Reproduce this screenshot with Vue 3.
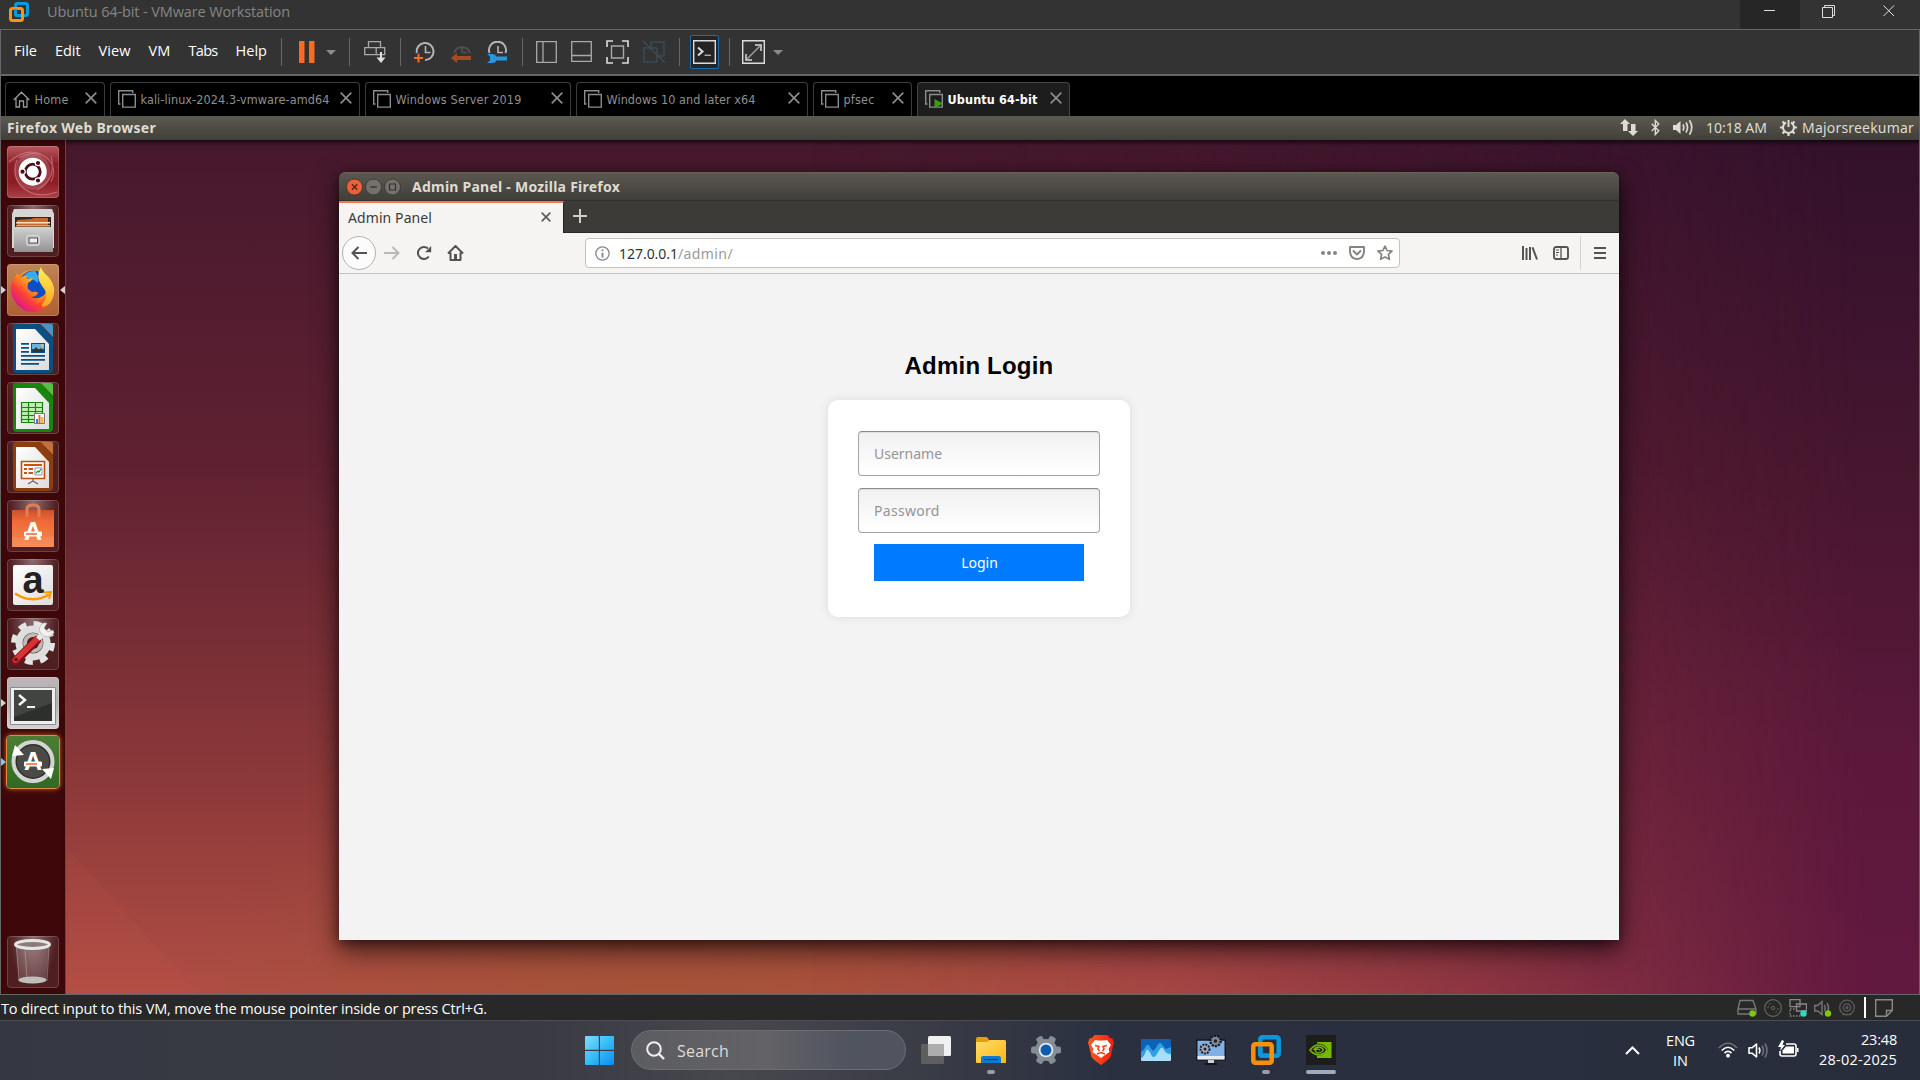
<script setup>
// Tracks a label out (or in) so that it occupies the given width in pixels.
const vFit = {
  mounted(el, { value }) {
    const natural = el.getBoundingClientRect().width
    el.style.letterSpacing = `${(value - natural) / el.textContent.length}px`
  },
}

const menus = [
  { label: 'File', w: 23 },
  { label: 'Edit', w: 25.5 },
  { label: 'View', w: 32 },
  { label: 'VM', w: 22 },
  { label: 'Tabs', w: 29 },
  { label: 'Help', w: 31.5 },
]

const tabs = [
  { label: 'Home', width: 100, text: 34, kind: 'home' },
  { label: 'kali-linux-2024.3-vmware-amd64', width: 250, text: 189, kind: 'vm' },
  { label: 'Windows Server 2019', width: 206, text: 126, kind: 'vm' },
  { label: 'Windows 10 and later x64', width: 232, text: 149, kind: 'vm' },
  { label: 'pfsec', width: 99, text: 31, kind: 'vm' },
  { label: 'Ubuntu 64-bit', width: 153, text: 90, kind: 'vm', active: true },
]
</script>

<template>
  <div class="screen">
    <svg class="defs" width="0" height="0">
      <defs>
        <linearGradient id="steel" x1="0" y1="0" x2="0" y2="1"><stop offset="0" stop-color="#d2d2d2" /><stop offset="1" stop-color="#929292" /></linearGradient>
        <linearGradient id="page" x1="0" y1="0" x2="1" y2="1"><stop offset="0" stop-color="#fff" /><stop offset="1" stop-color="#dcdcdc" /></linearGradient>
        <linearGradient id="fox" x1=".8" y1="0" x2=".1" y2=".8"><stop offset="0" stop-color="#ffd52e" /><stop offset=".4" stop-color="#ff9320" /><stop offset=".7" stop-color="#fb4034" /><stop offset="1" stop-color="#e01b86" /></linearGradient>
        <linearGradient id="flame" x1="0" y1="0" x2="0" y2="1"><stop offset="0" stop-color="#fff35a" /><stop offset="1" stop-color="#ffa51c" /></linearGradient>
        <linearGradient id="win" x1="0" y1="0" x2="1" y2="1"><stop offset="0" stop-color="#7fdcff" /><stop offset=".5" stop-color="#35bdf8" /><stop offset="1" stop-color="#0a8df2" /></linearGradient>
        <linearGradient id="folder" x1="0" y1="0" x2="1" y2="1"><stop offset="0" stop-color="#ffdc6c" /><stop offset="1" stop-color="#fdb813" /></linearGradient>
        <linearGradient id="brave" x1="0" y1="0" x2="1" y2="0"><stop offset="0" stop-color="#ff5a1f" /><stop offset="1" stop-color="#f21d0c" /></linearGradient>
        <linearGradient id="bag" x1="0" y1="0" x2="0" y2="1"><stop offset="0" stop-color="#c9512f" /><stop offset=".3" stop-color="#ef6a35" /><stop offset="1" stop-color="#f5854e" /></linearGradient>
      </defs>
    </svg>

    <header class="titlebar">
      <svg class="vmlogo" width="20" height="20" viewBox="0 0 20 20" fill="none" stroke-width="3">
        <rect x="6.5" y="1.5" width="12" height="12" rx="2" stroke="#0b9bdc" />
        <rect x="1.5" y="6.5" width="12" height="12" rx="2" stroke="#f7941d" />
        <path d="M6.5 7v4.500q0 2 2 2h3" stroke="#0b9bdc" />
      </svg>
      <span v-fit="243" class="wintitle">Ubuntu 64-bit - VMware Workstation</span>
      <div class="winbtns">
        <div class="winbtn hover"><svg width="12" height="14" viewBox="0 0 12 14"><path d="M0 5.500h11" stroke="#ddd" /></svg></div>
        <div class="winbtn"><svg width="14" height="14" viewBox="0 0 14 14" fill="none" stroke="#ddd"><path d="M.5 2.500h10v10H.5zM2.500 2.500V.5h10v10h-2" /></svg></div>
        <div class="winbtn"><svg width="12" height="12" viewBox="0 0 12 12"><path d="M.5.5l10.500 10.500M11 .5L.5 11" stroke="#ddd" /></svg></div>
      </div>
    </header>

    <nav class="toolbar">
      <div class="menus"><span v-for="m in menus" :key="m.label" v-fit="m.w" class="menu">{{ m.label }}</span></div>
      <i class="sep" />
      <svg class="t-pause" width="38" height="22" viewBox="0 0 38 22"><path d="M0 0h5.500v22H0zM10 0h5.500v22H10z" fill="#fb6a22" /><path d="M27 9h10l-5 5z" fill="#8b8b8b" /></svg>
      <i class="sep" />
      <svg class="t-send" width="22" height="22" viewBox="0 0 22 22" fill="none" stroke="#a9a9a9" stroke-width="1.300"><path d="M4.500.7h12v6h-12zM.7 6.700h11.500v7H.7zM12.200 6.700h8.500v7h-8.500z" /><path d="M17 11v7" stroke="#ddd" stroke-width="2" /><path d="M12.500 16.500h9L17 22z" fill="#ddd" stroke="none" /></svg>
      <i class="sep" />
      <div class="clocks">
        <svg width="21" height="22" viewBox="0 0 21 22" fill="none"><path d="M2.700 12A8.500 8.500 0 1 1 11 19" stroke="#b5b5b5" stroke-width="2" /><path d="M11.500 5v6.500h5" stroke="#b5b5b5" stroke-width="1.600" /><path d="M0 17h9M4.500 12.500v9" stroke="#fb6a22" stroke-width="2" /></svg>
        <svg width="21" height="22" viewBox="0 0 21 22" fill="none"><path d="M3 12A8.500 8.500 0 0 1 19 12" stroke="#505050" stroke-width="2" /><path d="M11 5v6.500h5" stroke="#505050" stroke-width="1.600" /><path d="M5 17h15" stroke="#a34c24" stroke-width="4" /><path d="M0 17l6-5v10z" fill="#a34c24" /></svg>
        <svg width="21" height="22" viewBox="0 0 21 22" fill="none"><path d="M2.500 12A8.500 8.500 0 1 1 18.500 12" stroke="#b5b5b5" stroke-width="2" /><path d="M11 5v6.500h5" stroke="#b5b5b5" stroke-width="1.600" /><path d="M0 13h5q4 0 4 2.500h11v4H9Q9 22 5 22H0l3-2.500v-4z" fill="#2a97dc" /></svg>
      </div>
      <i class="sep" />
      <div class="views">
        <svg width="21" height="22" viewBox="0 0 21 22" fill="none" stroke="#a9a9a9" stroke-width="1.300"><path d="M.7.7h19.600v20.600H.7zM7 .7v20.600" /></svg>
        <svg width="21" height="22" viewBox="0 0 21 22" fill="none" stroke="#a9a9a9" stroke-width="1.300"><path d="M.7.7h19.600v19.600H.7zM.7 14.500h19.600" /></svg>
        <svg width="23" height="24" viewBox="0 0 23 24" fill="none"><path d="M1 7V1h6M16 1h6v6M22 17v6h-6M7 23H1v-6" stroke="#ddd" stroke-width="1.600" /><path d="M5.500 6h12v12h-12z" stroke="#a9a9a9" stroke-width="1.400" /></svg>
        <svg width="23" height="24" viewBox="0 0 23 24" fill="none" stroke="#3a4a57" stroke-width="1.400"><path d="M8 8V2h13v14h-7M1 8h13v14H1zM0 1l22 22" /></svg>
      </div>
      <i class="sep" />
      <div class="console"><svg width="23" height="24" viewBox="0 0 23 24" fill="none"><path d="M.7.7h21.600v22.600H.7z" fill="#242424" stroke="#ddd" stroke-width="1.400" /><path d="M5 7.500l4.500 4L5 15.500" stroke="#ddd" stroke-width="2" /><path d="M11.500 15.300H18" stroke="#aaa" stroke-width="1.400" /></svg></div>
      <i class="sep" />
      <svg class="t-full" width="42" height="24" viewBox="0 0 42 24" fill="none"><path d="M.7.7h21.600v22.600H.7z" stroke="#ddd" stroke-width="1.400" /><path d="M13 5h6v6M4 14v6h6" stroke="#ddd" stroke-width="1.500" /><path d="M5 19L18 6" stroke="#999" stroke-width="1.600" /><path d="M31 10h10l-5 5z" fill="#8b8b8b" /></svg>
    </nav>

    <div class="tabstrip">
      <div v-for="t in tabs" :key="t.label" class="vmtab" :class="{ active: t.active, home: t.kind === 'home' }" :style="{ width: t.width + 'px' }">
        <svg v-if="t.kind === 'home'" width="17" height="17" viewBox="0 0 17 17" fill="none" stroke="#9a9a9a" stroke-width="1.300"><path d="M.7 9L8.500 1.200 16.300 9M3 7v9h3.500v-6h4v6H14V7" /></svg>
        <svg v-else width="18" height="18" viewBox="0 0 18 18" fill="none" stroke="#8c8c8c" stroke-width="1.400"><path d="M2.500 14H.7V.7h14V3M4.700 4.500h12.600v12.600H4.700z" /><path v-if="t.active" d="M9.500 9l8.500 4.500L9.500 18z" fill="#3f9c0c" stroke="none" /></svg>
        <span v-fit="t.text" class="vmtext">{{ t.label }}</span>
        <svg class="x" width="12" height="12" viewBox="0 0 12 12"><path d="M.7.7l10.600 10.600M11.300.7L.7 11.300" stroke="#8c8c8c" stroke-width="1.700" /></svg>
      </div>
    </div>

    <main class="guest">
      <div class="panel">
        <b v-fit="149">Firefox Web Browser</b>
        <div class="indicators">
          <svg width="18" height="17" viewBox="0 0 18 17" fill="#dfdbd2"><path d="M5 0l5 5H7.500v7H3V5H0zM13 17l5-5h-2.500V5H11v7H8z" /></svg>
          <svg class="bt" width="9" height="17" viewBox="0 0 9 17" fill="none" stroke="#dfdbd2" stroke-width="1.400"><path d="M.7 4.800l7 7-3.400 3.700V1.500l3.400 3.500-7 7" /></svg>
          <svg class="vol" width="21" height="17" viewBox="0 0 21 17" fill="none" stroke="#dfdbd2" stroke-width="1.700"><path d="M0 6h3l4.500-4v13L3 11H0z" fill="#dfdbd2" stroke="none" /><path d="M10 5.500q1.500 3 0 6M13 3.500q3 5 0 10M16.500 1.200q4.500 7.300 0 14.600" /></svg>
          <span v-fit="61" class="clock">10:18 AM</span>
          <svg class="cog" width="17" height="17" viewBox="0 0 17 17" fill="none" stroke="#dfdbd2"><path d="M6 3.500a5.500 5.500 0 1 0 5 0" stroke-width="2" /><path d="M8.500 1v7" stroke-width="2" /><path d="M0 8.500h3M14 8.500h3M8.500 14v3M2.500 2.500l2 2M14.500 2.500l-2 2M2.500 14.500l2-2M14.500 14.500l-2-2" stroke-width="2.200" /></svg>
          <span v-fit="112">Majorsreekumar</span>
        </div>
      </div>

      <div class="desktop">
        <aside class="launcher">
          <div class="tile dash"><svg viewBox="0 0 52 52" fill="none"><path d="M12 12Q30 2 42 14 50 24 44 36M50 46Q28 54 14 40 4 28 10 14M2 16Q18 2 34 8M44 10q6 24-14 34" stroke="#d98a90" stroke-width="1.200" opacity=".6" /><circle cx="25.700" cy="25.700" r="18" fill="#fff" opacity=".15" /><circle cx="25.700" cy="25.700" r="14" fill="#fff" /><circle cx="25.700" cy="25.700" r="7.500" stroke="#4c0d16" stroke-width="2.800" /><g fill="#4c0d16" stroke="#fff" stroke-width="1.200"><circle cx="15.500" cy="25.700" r="2.700" /><circle cx="31" cy="17" r="2.700" /><circle cx="31" cy="34.500" r="2.700" /></g></svg></div>
          <div class="tile"><svg viewBox="0 0 52 52"><path d="M7 4h38l2 5v34H5V9z" fill="#d5d5d5" /><path d="M8 12h36v10H8z" fill="#33261f" /><path d="M10 15l14-1 3-1h14v8H10z" fill="#c9682a" /><path d="M9 17h34v1.500H9z" fill="#ffe4bf" /><path d="M9 20h34v1.500H9z" fill="#f3a155" /><path d="M7 22h39v25H7z" fill="url(#steel)" /><rect x="19.500" y="30.500" width="13" height="10" rx="2" fill="#c2c2c2" stroke="#d9d9d9" /><rect x="22" y="33" width="8.500" height="5" fill="#eee" stroke="#555" /></svg></div>
          <div class="tile ff"><svg viewBox="0 0 52 52"><circle cx="26" cy="27" r="21" fill="url(#fox)" /><circle cx="26.500" cy="21" r="14.500" fill="#0c4fc4" /><path d="M14 15q6-9 14-8 4 5 3 12-6-6-17-4z" fill="#35aaf5" /><path d="M4 28Q3 19 9 12l1-3 3 5q2-2 7-2-1 2 0 3l6-1q-1 3-5 5-1 4 0 6l4 3q4-1 6 1-2 4-7 4 6 3 12-1-4 12-16 11Q6 40 4 28z" fill="url(#fox)" /><path d="M34 3q1 4 6 9 8 8 7 17-2 12-11 14-2-1-1-3 5-4 4-11-1-4-4-7-7-9-1-19z" fill="url(#flame)" /></svg></div>
          <div class="tile"><svg viewBox="0 0 52 52"><path d="M6 4q0-3 3-3h24l13 14v31q0 4-4 4H10q-4 0-4-4z" fill="#0b4f82" /><path d="M34 1h10q2 0 2 2v11z" fill="#4c93c2" /><path d="M9 6h19l14 15v26H9z" fill="url(#page)" /><g fill="#0b4f82"><path d="M14 20h8v1.800h-8zM14 24h8v1.800h-8zM14 28h8v1.800h-8zM14 32h24v1.800H14zM14 36h24v1.800H14zM14 40h18v1.800H14z" /><path d="M24 20h14v10H24z" /></g><path d="M25 21h12v5H25z" fill="#6ab3dd" /><path d="M25 29l4-5 3 3 2-2 3 4z" fill="#333" /><circle cx="35.500" cy="22.500" r="1.300" fill="#f5c83b" /></svg></div>
          <div class="tile"><svg viewBox="0 0 52 52"><path d="M6 4q0-3 3-3h24l13 14v31q0 4-4 4H10q-4 0-4-4z" fill="#17860f" /><path d="M34 1h10q2 0 2 2v11z" fill="#55c044" /><path d="M9 6h19l14 15v26H9z" fill="url(#page)" /><path d="M14 20h22v21H14z" fill="#bdeeb0" /><path d="M14.500 20.500h21v20h-21zM14 25.500h22M14 29.500h22M14 33.500h22M14 37.500h22M21.500 20v21M28.500 20v21" fill="none" stroke="#17860f" stroke-width="1.200" /><path d="M27.500 31.500h10v10h-10z" fill="#fff" stroke="#777" /><path d="M29 37h2v4h-2z" fill="#2686d0" /><path d="M31.500 33h2v8h-2z" fill="#f26a1b" /><path d="M34 35h2.500v6H34z" fill="#f5b83b" /></svg></div>
          <div class="tile"><svg viewBox="0 0 52 52"><path d="M6 4q0-3 3-3h24l13 14v31q0 4-4 4H10q-4 0-4-4z" fill="#8e3d0c" /><path d="M34 1h10q2 0 2 2v11z" fill="#c66f36" /><path d="M9 6h19l14 15v26H9z" fill="url(#page)" /><path d="M14.500 20.500h23v17h-23z" fill="#fff" stroke="#b8500f" stroke-width="1.600" /><path d="M17 23h18v2H17zM17 27h3v2h-3zM21.500 27H26v2h-4.500zM17 31h3v2h-3zM21.500 31H26v2h-4.500z" fill="#c9560f" /><path d="M28 27h7v7h-7z" fill="#fff" stroke="#777" stroke-width=".8" /><path d="M29 32l2-2 1 1 2-3" fill="none" stroke="#189a3c" stroke-width="1.200" /><path d="M26 38v2l-5 3M26 40l5 3" fill="none" stroke="#666" stroke-width="1.300" /></svg></div>
          <div class="tile"><svg viewBox="0 0 52 52"><path d="M5 10h42v37H5z" fill="url(#bag)" /><path d="M5 37h42v10H5z" fill="#fff" opacity=".08" /><path d="M20 17V9q0-4 6-4t6 4v8" fill="none" stroke="#e57b58" stroke-width="3" /><text x="26" y="40" class="glyph" font-size="25" fill="#fff">A</text><rect x="17" y="31.500" width="18" height="5" rx="1" fill="#fff" /><path d="M19 33.200h11v1.600H19z" fill="#ef6a35" /></svg></div>
          <div class="tile"><svg viewBox="0 0 52 52"><rect x="6" y="6" width="40" height="40" rx="2" fill="url(#page)" /><text x="26" y="34" class="glyph" font-size="38" fill="#222">a</text><path d="M8 34.500q17 11 34 1" fill="none" stroke="#f90" stroke-width="2.600" /><path d="M37 33.500l7-.5-2 7" fill="none" stroke="#f90" stroke-width="2" /></svg></div>
          <div class="tile"><svg viewBox="0 0 52 52"><circle cx="26" cy="25" r="18.500" fill="none" stroke="#e4e4e4" stroke-width="7" stroke-dasharray="7.500 7.030" /><circle cx="26" cy="25" r="14" fill="none" stroke="#dedede" stroke-width="7" /><circle cx="26" cy="25" r="10" fill="#bbb" /><circle cx="26" cy="25" r="6" fill="#5a1518" /><path d="M8.500 43L30 22" stroke="#8c0f12" stroke-width="8.500" stroke-linecap="round" /><path d="M8.500 42L29.500 21.500" stroke="#d23437" stroke-width="5.500" stroke-linecap="round" /><path d="M31 21L38 13" stroke="#e8e8e8" stroke-width="5" /><path d="M36 5q-6 5-2 11 6 6 13-1l-1-3-5 2-4-4 3-5z" fill="#f0f0f0" stroke="#aaa" stroke-width=".6" /><circle cx="9" cy="41.500" r="1.800" fill="#5a1518" /></svg></div>
          <div class="tile term"><svg viewBox="0 0 52 52"><path d="M3.500 10.500h45v37h-45z" fill="#eee" stroke="#8c8c8c" /><path d="M7 13h38v31H7z" fill="#2d2f2d" /><path d="M7 13h38v13L7 40z" fill="#fff" opacity=".1" /><path d="M12 18l6 5-6 5" fill="none" stroke="#f4f4f4" stroke-width="2.500" /><path d="M20 30h8" stroke="#f4f4f4" stroke-width="2" /></svg></div>
          <div class="tile upd"><svg viewBox="0 0 52 52"><circle cx="26" cy="25.500" r="19.500" fill="#2f2f2d" stroke="#d4d4d4" stroke-width="4" /><circle cx="26" cy="25.500" r="16" fill="#4a4a47" /><path d="M5 20l12-1L8 9zM47 32L35 33l9 10z" fill="#fff" /><text x="26" y="34" class="glyph" font-size="25" fill="#fff">A</text><rect x="17" y="25.500" width="18" height="5" rx="1" fill="#fff" /><path d="M19 27.200h11v1.600H19z" fill="#ef6a35" /></svg></div>
          <div class="tile trash"><svg viewBox="0 0 52 52"><path d="M9 11h33l-3 34q-14 5-27 0z" fill="#fff" opacity=".17" /><path d="M9.500 12l2.500 33M42 12l-2 33M18 15l2 27" stroke="#ddd" opacity=".35" fill="none" /><ellipse cx="25.500" cy="44" rx="14" ry="3.500" fill="#bdbfba" /><ellipse cx="25.500" cy="8.500" rx="17" ry="4" fill="#8d7b7b" stroke="#e4e6e2" stroke-width="3" /></svg></div>
          <i class="pip p3" /><i class="pip p3 right" /><i class="pip p10" /><i class="pip p11" />
        </aside>

        <div class="wallpaper">
          <section class="firefox">
            <div class="fx-title">
              <svg width="56" height="18" viewBox="0 0 56 18"><circle cx="8.500" cy="9" r="8" fill="#ec6238" stroke="#44302a" stroke-width=".8" /><path d="M6 6.300l5.200 5.400M11.200 6.300L6 11.700" stroke="#5c2412" stroke-width="1.400" /><circle cx="27.500" cy="9" r="8" fill="#73716a" stroke="#33322e" stroke-width=".8" /><path d="M24.300 9h6.500" stroke="#33322e" stroke-width="1.300" /><circle cx="46.500" cy="9" r="8" fill="#73716a" stroke="#33322e" stroke-width=".8" /><path d="M43.500 6h6v6h-6z" fill="none" stroke="#33322e" stroke-width="1.200" /></svg>
              <b v-fit="208">Admin Panel - Mozilla Firefox</b>
            </div>
            <div class="fx-tabs">
              <div class="fx-tab"><span v-fit="84">Admin Panel</span><svg width="10" height="10" viewBox="0 0 10 10"><path d="M.7.7l8.600 8.600M9.300.7L.7 9.300" stroke="#5e5d5a" stroke-width="1.700" /></svg></div>
              <svg class="plus" width="14" height="14" viewBox="0 0 14 14"><path d="M7 0v14M0 7h14" stroke="#d0cec8" stroke-width="2" /></svg>
            </div>
            <div class="fx-nav">
              <div class="back"><svg width="16" height="14" viewBox="0 0 16 14" fill="none" stroke="#55534f" stroke-width="2"><path d="M7.500 1l-6 6 6 6M1.500 7H16" /></svg></div>
              <svg class="fwd" width="16" height="14" viewBox="0 0 16 14" fill="none" stroke="#bab8b5" stroke-width="2"><path d="M8.500 1l6 6-6 6M14.500 7H0" /></svg>
              <svg class="reload" width="16" height="16" viewBox="0 0 16 16" fill="none" stroke="#55534f" stroke-width="2"><path d="M12.800 11.500A6 6 0 1 1 12 3.500" /><path d="M15.200 1v6.200H9z" fill="#55534f" stroke="none" /></svg>
              <svg class="fxhome" width="17" height="16" viewBox="0 0 17 16" fill="none" stroke="#55534f" stroke-width="2" stroke-linejoin="round"><path d="M1 8.500L8.500 1 16 8.500M3.500 7.500V15h10V7.500" /><path d="M7 9h3v6H7z" fill="#55534f" stroke="none" /></svg>
              <div class="url">
                <svg width="15" height="15" viewBox="0 0 15 15" fill="none" stroke="#888" stroke-width="1.300"><circle cx="7.500" cy="7.500" r="6.600" /><path d="M7.500 6.700V11.500M7.500 3.500v1.800" stroke-width="1.900" /></svg>
                <span v-fit="59" class="host">127.0.0.1</span><span v-fit="55" class="path">/admin/</span>
                <svg class="dots" width="16" height="4" viewBox="0 0 16 4" fill="#86847f"><circle cx="2" cy="2" r="2" /><circle cx="8" cy="2" r="2" /><circle cx="14" cy="2" r="2" /></svg>
                <svg class="pocket" width="16" height="14" viewBox="0 0 16 14" fill="none" stroke="#86847f" stroke-width="1.900" stroke-linejoin="round"><path d="M1 1h14v5q-1 7-7 7T1 6z" /><path d="M4.500 5L8 8.500 11.500 5" stroke-linecap="round" /></svg>
                <svg class="star" width="16" height="16" viewBox="0 0 16 16" fill="none" stroke="#86847f" stroke-width="1.700" stroke-linejoin="round"><path d="M8 1.200l2.100 4.300 4.900.6-3.600 3.300 1 4.900L8 12l-4.400 2.300 1-4.900L1 6.100l4.900-.6z" /></svg>
              </div>
              <svg class="lib" width="16" height="14" viewBox="0 0 16 14" stroke="#55534f" stroke-width="2"><path d="M1 0v14M4.500 2v12M8 1v13M10.500 1.300L15 13.500" /></svg>
              <svg class="side" width="16" height="14" viewBox="0 0 16 14" fill="none" stroke="#55534f" stroke-width="1.900"><rect x="1" y="1" width="14" height="12" rx="2" /><path d="M8 1v12" stroke-width="1.300" /><path d="M3 4h3M3 6.500h3M3 9h2" stroke-width="1" /></svg>
              <i class="navsep" />
              <svg width="12" height="12" viewBox="0 0 12 12" stroke="#55534f" stroke-width="2"><path d="M0 1h12M0 6h12M0 11h12" /></svg>
            </div>
            <div class="page">
              <h2>Admin Login</h2>
              <form class="card" @submit.prevent>
                <input type="text" placeholder="Username">
                <input type="password" placeholder="Password">
                <button type="submit">Login</button>
              </form>
            </div>
          </section>
        </div>
      </div>
    </main>

    <footer class="status">
      <span v-fit="486">To direct input to this VM, move the mouse pointer inside or press Ctrl+G.</span>
      <div class="devices">
        <svg width="20" height="18" viewBox="0 0 20 18" fill="none" stroke="#777" stroke-width="1.400"><path d="M3 1.500h13L19 10v5H1v-5zM1 10h18" /><circle cx="15.500" cy="14.500" r="3.200" fill="#7cc90f" stroke="none" /></svg>
        <svg width="18" height="18" viewBox="0 0 18 18" fill="none" stroke="#666"><circle cx="9" cy="9" r="8.300" stroke-width="1.200" /><circle cx="9" cy="9" r="1.700" /><path d="M4 9q0-4 4-5M14 9q0 4-4 5" stroke-dasharray="2 1.500" /></svg>
        <svg width="18" height="18" viewBox="0 0 18 18" fill="none" stroke="#888" stroke-width="1.300"><path d="M1 .7h10v7H1zM7.500 5h10v7h-10z" /><path d="M1 10h6M1 17h11M1 11v6" stroke-dasharray="1.500 1.500" /><circle cx="14.500" cy="14.500" r="3.200" fill="#2fd9c4" stroke="none" /></svg>
        <svg width="18" height="18" viewBox="0 0 18 18" fill="none" stroke="#777" stroke-width="1.400"><path d="M.7 6.500h3L8 2.500v13L3.700 12h-3zM10.500 6q1.500 3 0 6M13 4q2.500 4 1 8" /><circle cx="14" cy="14.500" r="3.200" fill="#7cc90f" stroke="none" /></svg>
        <svg width="16" height="18" viewBox="0 0 16 18" fill="none" stroke="#5c5c5c" stroke-width="1.300"><circle cx="8" cy="8.500" r="7.300" /><circle cx="8" cy="8.500" r="3.700" /><circle cx="8" cy="8.500" r="1" /><path d="M3.500 15.500h9" /></svg>
        <i class="bar" />
        <svg width="18" height="18" viewBox="0 0 18 18" fill="none" stroke="#8a8a8a" stroke-width="1.400"><path d="M.7.7h16.600v10.800l-5.800 5.800H.7zM17.300 11.500h-5.800v5.800" /></svg>
      </div>
    </footer>

    <div class="taskbar">
      <div class="apps">
        <svg class="start" width="29" height="29" viewBox="0 0 29 29" fill="url(#win)"><path d="M1 0h12.800v13.800H0V1q0-1 1-1zM15 0h13q1 0 1 1v12.800H15zM0 15h13.800v14H1q-1 0-1-1zM15 15h14v13q0 1-1 1H15z" /></svg>
        <div class="search"><svg width="19" height="19" viewBox="0 0 19 19" fill="none" stroke="#eee" stroke-width="2"><circle cx="8" cy="8" r="6.800" /><path d="M13 13l5 5" stroke-width="2.400" /></svg><span v-fit="52">Search</span></div>
        <div class="app"><svg viewBox="0 0 30 30"><rect x="0" y="9" width="23" height="20" rx="1.500" fill="#5f5f5f" /><rect x="7" y="1" width="23" height="20" rx="1.500" fill="#f0f0f0" /><path d="M7 9h16v12H8.500Q7 21 7 19.500z" fill="#adadad" /></svg></div>
        <div class="app run"><svg viewBox="0 0 30 30"><path d="M0 4q0-2 2-2h8q2 0 3 3h15q2 0 2 2v21H0z" fill="#e3a008" /><path d="M0 7h11l3-2h14q2 0 2 2v19q0 2-2 2H2q-2 0-2-2z" fill="url(#folder)" /><path d="M5 28v-5q0-2 2-2h16q2 0 2 2v5z" fill="#0f7bd0" /><path d="M8 24.500h14" stroke="#07467f" stroke-width="1.200" /></svg></div>
        <div class="app"><svg viewBox="0 0 30 30"><circle cx="15" cy="15" r="11" fill="#848c95" /><g fill="#848c95"><rect x="0" y="11.500" width="30" height="7" rx="2" /><rect x="0" y="11.500" width="30" height="7" rx="2" transform="rotate(60 15 15)" /><rect x="0" y="11.500" width="30" height="7" rx="2" transform="rotate(120 15 15)" /></g><circle cx="15" cy="15" r="7.300" fill="#e5e9ee" /><circle cx="15" cy="15" r="5.500" fill="#0f5cad" /></svg></div>
        <div class="app"><svg viewBox="0 0 30 30"><path d="M8.500 0h13L24 3l2.500.5L28 8l-1 3-2.500 11q-1 2-9.500 8-8.500-6-9.500-8L3 11 2 8l1.500-4.500L6 3z" fill="url(#brave)" /><path d="M9 5l3 .5h6l3-.5 4 5-2.500 4 1 3-4.500 3-4 3-4-3-4.500-3 1-3L5 10z" fill="#fff" /><path d="M9 10.500l4 1-1 2.500 1.500 2M21 10.500l-4 1 1 2.500-1.500 2M11 19l4-1.500 4 1.500" fill="none" stroke="#fb3f18" stroke-width="1.600" /></svg></div>
        <div class="app"><svg viewBox="0 0 30 30"><rect y="4" width="30" height="22" rx="1" fill="#0d62b5" /><path d="M0 17q3-2 5-6 2-3 4 1l3 4q2-1 4-5 2-5 5-2 2 4 4 5l5-2v13H0z" fill="#2f9fe6" /><path d="M0 23q3-1 5-7 1-3 3 0l3 5q2 3 5-2l3-5q2-3 4 1 2 4 7 4v6q0 1-1 1H1q-1 0-1-1z" fill="#a9defa" /></svg></div>
        <div class="app"><svg viewBox="0 0 30 30"><rect x=".7" y="5" width="28.600" height="20" rx="1" fill="#7fb0e8" stroke="#15181d" stroke-width="1.600" /><path d="M1.500 21h27v3.500h-27z" fill="#e6ebef" /><path d="M12 25h6v3h-6z" fill="#c9d1d8" /><path d="M9 29h12" stroke="#111" stroke-width="1.800" /><circle cx="9" cy="14" r="4.500" fill="#9fa8b0" stroke="#1d232b" stroke-width="2" stroke-dasharray="2 1" /><circle cx="9" cy="14" r="1.500" fill="#1d232b" /><circle cx="19.500" cy="6" r="5.200" fill="#7f8890" stroke="#15191f" stroke-width="2.200" stroke-dasharray="2.200 1" /><circle cx="19.500" cy="6" r="1.700" fill="#1d232b" /></svg></div>
        <div class="app run"><svg viewBox="0 0 30 30" fill="none" stroke-width="4.500"><rect x="9.300" y="2.300" width="18.400" height="18.400" rx="2" stroke="#0b97d8" /><rect x="2.300" y="9.300" width="18.400" height="18.400" rx="2" stroke="#f7900a" /><path d="M9.300 12v6.700q0 2 2 2H18" stroke="#0b97d8" /></svg></div>
        <div class="app run focus"><svg viewBox="0 0 30 30"><path d="M0 0h30v30H0z" fill="#1d1d1b" /><path d="M11 7h14.500v16H11z" fill="#76b900" /><path d="M3 15q4-6 9-6.500 7 0 10 6-4 6-10 6.500-6-1-9-6z" fill="#1d1d1b" /><path d="M4 15q4-5 8-5 6 0 9 5-3 5-9 5-5-1-8-5z" fill="none" stroke="#76b900" stroke-width="1.500" /><path d="M7.500 15q2-3 4.500-3 4 0 5.500 3-2 3-5.500 3-2 0-3-3 1-1 3-1 1.500.5 2 1.500" fill="none" stroke="#76b900" stroke-width="1.300" /></svg></div>
      </div>
      <div class="tray">
        <svg width="15" height="9" viewBox="0 0 15 9"><path d="M1 8l6.500-6.500L14 8" fill="none" stroke="#fff" stroke-width="2" /></svg>
        <div class="lang"><span v-fit="29">ENG</span><span v-fit="15">IN</span></div>
        <svg width="20" height="16" viewBox="0 0 20 16" fill="none" stroke-width="1.700"><path d="M1 6q9-9.500 18 0" stroke="#6b707a" /><path d="M3.700 8.500q6.300-6.500 12.600 0M6.500 11.200q3.500-3.500 7 0" stroke="#fff" /><circle cx="10" cy="13.700" r="1.900" fill="#fff" /></svg>
        <svg class="tvol" width="21" height="17" viewBox="0 0 21 17" fill="none" stroke="#fff" stroke-width="1.600" stroke-linejoin="round"><path d="M1 5.800h3L8.500 2v13L4 11.200H1z" /><path d="M11 5.500q1.700 3 0 6" /><path d="M14 3.500q3 5 0 10M17 1.500q4 7 0 14" stroke="#6b707a" /></svg>
        <svg class="bat" width="21" height="18" viewBox="0 0 21 18" fill="none" stroke="#fff" stroke-width="1.600"><path d="M8 4h8q2 0 2 2v8q0 2-2 2H4q-2 0-2-2v-3" /><path d="M8 6.500h8v7H4.500v-3z" fill="#fff" stroke="none" /><path d="M19 8h1.500v4H19z" fill="#fff" stroke="none" /><path d="M4 0L0 7h3l-1 4 5-6H4.500L6 1z" fill="#fff" stroke="none" /></svg>
        <div class="when"><span v-fit="36">23:48</span><span v-fit="78">28-02-2025</span></div>
      </div>
    </div>
  </div>
</template>

<style>
body { overflow: hidden; background: #000; }
</style>

<style scoped>
* { box-sizing: border-box; }
svg { display: block; flex: none; }
span, b { white-space: nowrap; }
.defs { position: absolute; }
.screen { width: 1920px; height: 1080px; display: flex; flex-direction: column; overflow: hidden; font-family: "Open Sans", "Noto Sans", sans-serif; color: #fff; }
.screen > * { flex: none; }

.titlebar { height: 30px; background: #333; border-bottom: 1px solid #666; display: flex; padding-left: 9px; }
.vmlogo { margin-top: 2px; }
.wintitle { margin-left: 18px; font-size: 14.500px; line-height: 24px; color: #868686; align-self: flex-start; }
.winbtns { display: flex; margin-left: auto; }
.winbtn { width: 60px; display: flex; justify-content: center; padding: 5px 2px 0 0; }
.winbtn.hover { background: #262626; padding-right: 0; }

.toolbar { height: 46px; background: #333; border-left: 1px solid #666; border-right: 1px solid #666; border-bottom: 2px solid #666; display: flex; align-items: center; }
.toolbar > * { flex: none; }
.menus { display: flex; gap: 18px; width: 280px; padding: 0 0 2px 13px; }
.menu { font-size: 14.500px; line-height: 20px; }
.sep { width: 1px; height: 28px; background: #666; }
.t-pause { margin: 0 12px 0 17px; }
.t-send { margin: 0 13.500px 0 14px; }
.clocks { display: flex; gap: 15.500px; margin: 0 14px 0 13.500px; }
.views { display: flex; gap: 14px; align-items: center; margin: 0 13px 0 12.500px; }
.console { margin: 0 10px 0 10px; width: 29px; height: 34px; border: 1px solid #1d6cab; border-radius: 2px; background: #242424; display: flex; align-items: center; justify-content: center; }
.t-full { margin-left: 12px; }

.tabstrip { height: 40px; background: #000; display: flex; align-items: flex-end; gap: 5px; border-left: 1px solid #666; border-right: 1px solid #666; padding-left: 4px; }
.vmtab { height: 34px; display: flex; align-items: center; gap: 5px; padding: 0 7.500px 1px 6.500px; border: 1px solid #3c3c3c; border-bottom: 0; border-radius: 4px 4px 0 0; font: 12.500px "DejaVu Sans Condensed", "DejaVu Sans", sans-serif; color: #8f8f8f; }
.vmtab.active { background: #1d1d1d; border-color: #454545; color: #fff; font-weight: bold; }
.x { margin-left: auto; position: relative; top: -1px; }

.guest { height: 878px; border-left: 1px solid #666; border-right: 1px solid #666; display: flex; flex-direction: column; font-family: "Noto Sans", "Open Sans", sans-serif; }
.panel { height: 24px; flex: none; background: linear-gradient(#5c5a50, #403f3a); display: flex; justify-content: space-between; padding: 0 5px 0 6px; font-size: 14px; line-height: 23px; color: #dfdbd2; }
.indicators { display: flex; align-items: center; padding-bottom: 1px; }
.bt { margin-left: 13px; }
.vol { margin-left: 13px; }
.clock { margin: 0 13px 0 12px; }
.cog { margin-right: 5px; }

.desktop { flex: 1; display: flex; min-height: 0; }
.launcher { position: relative; width: 65px; background: #3e080b; border-right: 1px solid rgba(255,190,170,.3); display: flex; flex-direction: column; align-items: center; gap: 7px; padding: 6px 0; box-shadow: inset 0 6px 6px -4px rgba(0,0,0,.5); }
.tile { flex: none; width: 52px; height: 52px; border-radius: 4px; background: radial-gradient(ellipse at 50% 0, rgba(255,255,255,.35), transparent 65%), rgba(255,255,255,.09); box-shadow: inset 0 0 0 1px rgba(255,255,255,.17); }
.tile svg { width: 52px; height: 52px; }
.tile.dash { background: linear-gradient(#b8585f, #8c1f2a 35%, #8f1c24 70%, #a94048); }
.tile.ff { background: linear-gradient(#c08457, #ad5f35); }
.tile.term { background: linear-gradient(#bdb6b8, #b5adaf 50%, #d6d2d3); }
.tile.upd { background: linear-gradient(#4d7d35, #2f6b22); box-shadow: 0 0 0 1px #e08a45, 0 0 5px 1px #c4622a; }
.tile.trash { margin-top: auto; }
.glyph { font-family: "Liberation Sans", sans-serif; font-weight: bold; text-anchor: middle; }
.pip { position: absolute; left: 0; border: 4px solid transparent; border-left: 5px solid #d8d0d0; border-right: 0; }
.pip.right { left: auto; right: 0; border-left: 0; border-right: 5px solid #d8d0d0; }
.p3 { top: 146px; }
.p10 { top: 559px; }
.p11 { top: 618px; border-left-color: #7fc5ec; }

.wallpaper { flex: 1; position: relative; padding: 32px 0 0 273px; background: linear-gradient(48deg, rgba(255,100,80,.05) 5%, transparent 5.100%), radial-gradient(ellipse 500px 260px at 32% 104%, rgba(150,90,40,.45), transparent), linear-gradient(#46182d, #5f2131 38%, #8c3939 75%, #b04e44); overflow: hidden; }
.wallpaper::before { content: ""; position: absolute; inset: 0; background: linear-gradient(#32112b, #47162f 40%, #5a183a 70%, #62193f); mask: linear-gradient(90deg, transparent 40%, rgba(0,0,0,.15) 60%, rgba(0,0,0,.4) 74%, rgba(0,0,0,.7) 86%, #000 97%); }
.wallpaper::after { content: ""; position: absolute; inset: 0 0 auto; height: 6px; background: linear-gradient(rgba(0,0,0,.6), transparent); }
.firefox { position: relative; width: 1280px; height: 768px; border-radius: 6px 6px 0 0; box-shadow: 0 10px 26px rgba(0,0,0,.65), 0 2px 10px rgba(0,0,0,.4); display: flex; flex-direction: column; color: #3c3b37; }
.firefox > * { flex: none; }
.fx-title { height: 28px; border-radius: 6px 6px 0 0; background: linear-gradient(#69675c, #59574e 7%, #403f3a); display: flex; align-items: center; padding: 1px 0 0 7px; }
.fx-title b { margin-left: 10px; font-size: 14px; line-height: 26px; color: #dfdbd2; }
.fx-tabs { height: 33px; background: #3c3b37; border-top: 1px solid #33322e; border-bottom: 1px solid #282724; display: flex; }
.fx-tab { width: 225px; height: 32px; background: #f5f4f3; border-top: 2px solid #f0774c; border-right: 1px solid #252421; display: flex; justify-content: space-between; align-items: center; padding: 0 12px 2px 9px; font-size: 14px; }
.plus { margin: 8px 0 0 9px; }
.fx-nav { height: 41px; background: #f5f4f2; border-bottom: 1px solid #c5c3c1; display: flex; align-items: center; padding-left: 3px; }
.back { width: 34px; height: 34px; border: 1px solid #b3b1af; border-radius: 50%; background: #fcfcfc; display: flex; align-items: center; justify-content: center; padding-right: 1px; }
.fwd { margin-left: 8px; }
.reload { margin-left: 16px; }
.fxhome { margin-left: 15px; }
.url { width: 815px; height: 30px; margin-left: 121px; background: #fff; border: 1px solid #c3c1be; border-radius: 4px; display: flex; align-items: center; padding: 0 6px 0 9px; font-size: 14px; line-height: 28px; }
.host { margin: 1px 0 0 9px; color: #333; }
.path { margin-top: 1px; color: #9a9a9a; }
.dots { margin-left: auto; }
.pocket { margin-left: 12px; }
.star { margin-left: 12px; }
.lib { margin-left: 122px; }
.side { margin-left: 15px; }
.navsep { width: 1px; height: 34px; margin: 0 13px 0 11px; background: #d5d3d1; }
.page { height: 666px; background: #f3f3f3; display: flex; flex-direction: column; align-items: center; padding-top: 78px; }
h2 { margin: 0 0 20px; font: bold 24px/28px "Liberation Sans", Arial, sans-serif; color: #000; letter-spacing: .2px; }
.card { width: 302px; height: 217px; background: #fff; border-radius: 10px; box-shadow: 0 0 10px rgba(0,0,0,.1); padding: 31px 0 0; display: flex; flex-direction: column; align-items: center; }
input { width: 242px; height: 45px; margin-bottom: 12px; padding: 0 15px; border: 1px solid #a6a6a6; border-top-color: #8b8b8b; border-radius: 4px; background: linear-gradient(#f1f1f1, #fff); box-shadow: inset 0 1px 1px rgba(0,0,0,.08); font: 14px "Noto Sans", sans-serif; outline: 0; }
input::placeholder { color: #959595; opacity: 1; }
input[type="password"] { letter-spacing: .3px; }
button { width: 210px; height: 37px; margin-top: -1px; padding-left: 7px; border: 0; background: #007bff; color: #fff; font: 14px "Noto Sans", sans-serif; }

.status { height: 27px; background: #282828; border-top: 1px solid #666; border-bottom: 1px solid #4c4d50; display: flex; justify-content: space-between; align-items: center; padding: 0 27px 0 1px; font-size: 14.500px; line-height: 24px; }
.status > span { margin-top: 2px; }
.devices { display: flex; align-items: center; gap: 7px; }
.bar { width: 2px; height: 21px; background: #fff; margin: 0 2px 0 2px; }

.taskbar { height: 59px; background: linear-gradient(90deg, #353842, #393a43 28%, #47484d 38%, #3a3c46 48%, #2a3040 58%, #272d3a); display: flex; justify-content: space-between; }
.apps { display: flex; padding-left: 585px; }
.start { margin-top: 15px; }
.search { width: 275px; height: 40px; margin: 9px 15px 0 17px; border-radius: 20px; border: 1px solid #6d6e73; background: linear-gradient(90deg, #5c5d61, #626267 50%, #50545f 80%, #51545f); display: flex; align-items: center; padding-left: 14px; font-size: 16px; line-height: 24px; color: #dcdcdc; }
.search span { margin-left: 12px; margin-top: 1px; }
.app { position: relative; width: 30px; height: 30px; margin: 14px 25px 0 0; }
.app svg { width: 30px; height: 30px; }
.app.run::after { content: ""; position: absolute; top: 35px; left: 11px; width: 8px; height: 4px; border-radius: 2px; background: #9b9ca3; }
.app.focus::after { left: 0; width: 30px; background: #9fabbd; }
.tray { display: flex; padding: 0 23px 0 0; }
.tray > svg { margin-top: 21px; }
.tray > svg:first-child { margin-top: 25px; }
.lang, .when { display: flex; flex-direction: column; align-items: center; font-size: 14.500px; line-height: 20px; }
.lang { margin: 10px 23px 0 26px; }
.when { align-items: flex-end; margin: 9px 0 0 20px; }
.tray .tvol { margin-left: 10px; }
.tray .bat { margin-left: 9px; margin-top: 19px; }
</style>
